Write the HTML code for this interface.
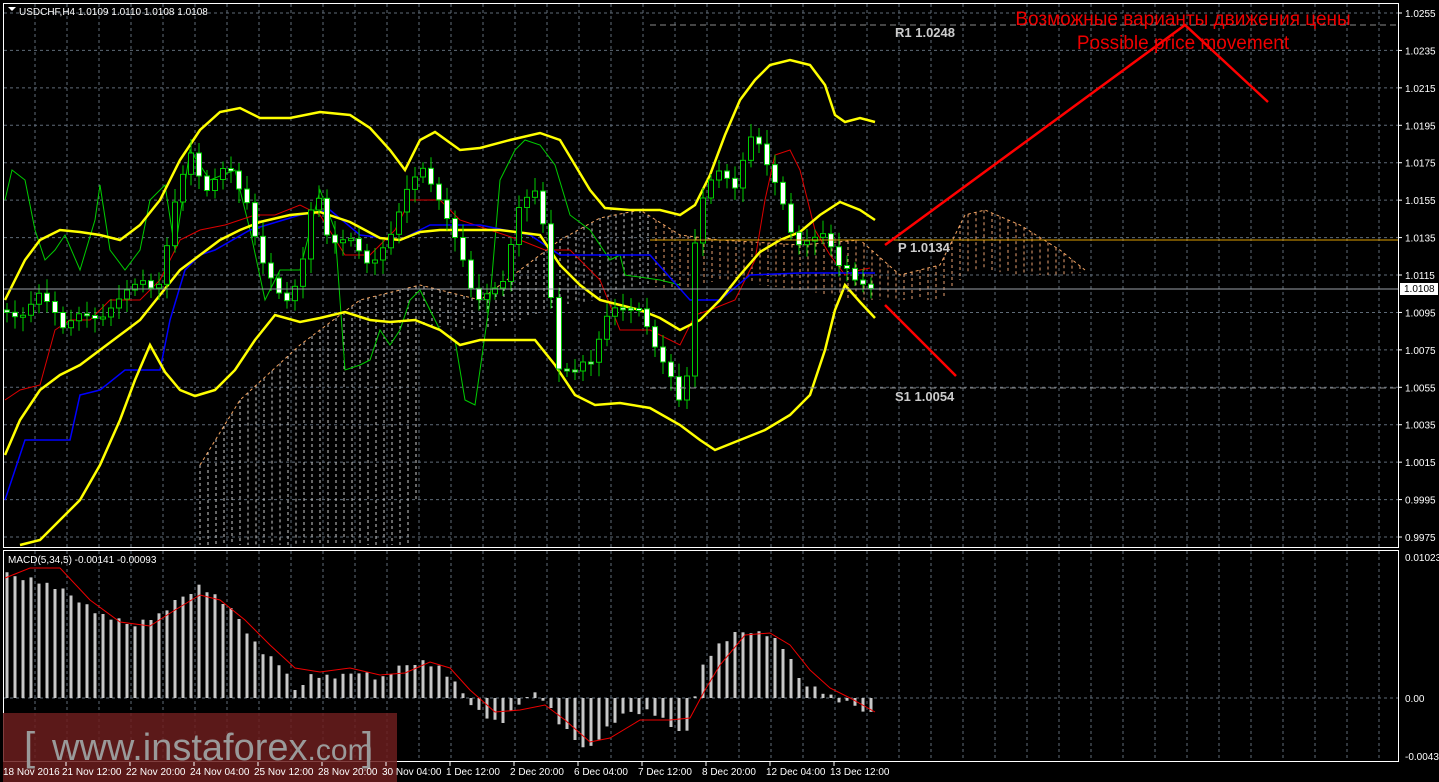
<!DOCTYPE html><html><head><meta charset="utf-8"><style>
html,body{margin:0;padding:0;background:#000;width:1439px;height:782px;overflow:hidden}
svg{display:block}
text{font-family:"Liberation Sans",sans-serif}
</style></head><body>
<svg id="s" width="1439" height="782" xmlns="http://www.w3.org/2000/svg">
<rect width="1439" height="782" fill="#000"/>
<g id="grid"></g>
<g id="cloud"></g>
<g id="lines"></g>
<g id="candles"></g>
<g id="macd"></g>
<line x1="650" y1="25" x2="1398" y2="25" stroke="#8a8a8a" stroke-dasharray="6,4"/>
<line x1="650" y1="240" x2="1398" y2="240" stroke="#e0a000" stroke-width="1"/>
<line x1="650" y1="388" x2="1398" y2="388" stroke="#8a8a8a" stroke-dasharray="6,4"/>
<line x1="3" y1="289" x2="1398" y2="289" stroke="#9aa0a8"/>
<text x="895" y="37" fill="#ccc" font-family="Liberation Mono" font-size="13" font-weight="bold">R1 1.0248</text>
<text x="898" y="252" fill="#ccc" font-family="Liberation Mono" font-size="13" font-weight="bold">P 1.0134</text>
<text x="895" y="401" fill="#ccc" font-family="Liberation Mono" font-size="13" font-weight="bold">S1 1.0054</text>
<polyline points="885,245 1185,25 1268,102" fill="none" stroke="#f00" stroke-width="2.5"/>
<line x1="885" y1="305" x2="956" y2="376" stroke="#f00" stroke-width="2.5"/>
<text x="1183" y="25" fill="#e00" font-size="19" text-anchor="middle">Возможные варианты движения цены</text>
<text x="1183" y="49" fill="#e00" font-size="19" text-anchor="middle">Possible price movement</text>
<rect x="3.5" y="3.5" width="1395" height="544" fill="none" stroke="#fff"/>
<rect x="3.5" y="550.5" width="1395" height="211" fill="none" stroke="#fff"/>
<path d="M8 7 L16 7 L12 11Z" fill="#fff"/>
<text x="19" y="15" fill="#fff" font-size="10">USDCHF,H4  1.0109 1.0110 1.0108 1.0108</text>
<text x="8" y="563" fill="#fff" font-size="10">MACD(5,34,5) -0.00141 -0.00093</text>
<g id="axis" fill="#fff" font-size="10"></g>
<rect x="1400" y="283" width="38" height="12" fill="#fff"/>
<text x="1404" y="292" fill="#000" font-size="10">1.0108</text>
<rect x="3" y="713" width="394" height="69" fill="#6b1d1d" opacity="0.85"/>
<text x="24" y="760" fill="#9a9a9a" font-size="40">[</text>
<text x="52" y="760" fill="#9a9a9a" font-size="38">www.instaforex<tspan font-size="30">.com</tspan></text>
<text x="362" y="760" fill="#9a9a9a" font-size="40">]</text>
<g id="dates" fill="#fff" font-size="10"></g>
</svg>
<script>
var NS="http://www.w3.org/2000/svg";
function el(p,t,a){var e=document.createElementNS(NS,t);for(var k in a)e.setAttribute(k,a[k]);document.getElementById(p).appendChild(e);return e;}
function interp(pts,x){if(x<=pts[0][0])return pts[0][1];for(var i=1;i<pts.length;i++){if(x<=pts[i][0]){var a=pts[i-1],b=pts[i];return a[1]+(b[1]-a[1])*(x-a[0])/(b[0]-a[0]);}}return pts[pts.length-1][1];}
function pl(id,pts,col,w,extra){var s=pts.map(function(p){return p.join(",")}).join(" ");var a={points:s,fill:"none",stroke:col,"stroke-width":w};for(var k in extra)a[k]=extra[k];el(id,"polyline",a);}
(function(){
for(var x=35;x<1398;x+=32){el("grid","line",{x1:x,y1:4,x2:x,y2:547,stroke:"#5f6b78","stroke-dasharray":"3,3"});el("grid","line",{x1:x,y1:551,x2:x,y2:761,stroke:"#5f6b78","stroke-dasharray":"3,3"});}
var labs=["1.0255","1.0235","1.0215","1.0195","1.0175","1.0155","1.0135","1.0115","1.0095","1.0075","1.0055","1.0035","1.0015","0.9995","0.9975"];
for(var i=0;i<15;i++){var y=13+i*37.43;el("grid","line",{x1:4,y1:y,x2:1398,y2:y,stroke:"#5f6b78","stroke-dasharray":"3,3"});el("axis","line",{x1:1398,y1:y,x2:1402,y2:y,stroke:"#fff"});var t=el("axis","text",{x:1405,y:y+4});t.textContent=labs[i];}
el("grid","line",{x1:4,y1:698,x2:1398,y2:698,stroke:"#5f6b78","stroke-dasharray":"3,3"});
[[561,"0.01023"],[702,"0.00"],[760,"-0.00433"]].forEach(function(a){var t=el("axis","text",{x:1405,y:a[0]});t.textContent=a[1];});
var ds=["18 Nov 2016","21 Nov 12:00","22 Nov 20:00","24 Nov 04:00","25 Nov 12:00","28 Nov 20:00","30 Nov 04:00","1 Dec 12:00","2 Dec 20:00","6 Dec 04:00","7 Dec 12:00","8 Dec 20:00","12 Dec 04:00","13 Dec 12:00"];
for(var i=0;i<ds.length;i++){var t=el("dates","text",{x:i==0?3:66+(i-1)*64-4,y:775});t.textContent=ds[i];if(i>0)el("dates","line",{x1:66+(i-1)*64,y1:762,x2:66+(i-1)*64,y2:766,stroke:"#fff"});}
var cU=[[200,465],[240,400],[300,345],[360,300],[420,285],[480,300],[520,270],[560,240],[600,218],[640,210],[680,235],[720,240],[800,245],[860,240],[900,275],[940,265],[965,215],[985,210],[1020,225],[1060,250],[1085,270]];
var cL=[[200,545],[300,545],[360,545],[415,545],[420,325],[480,330],[520,320],[560,305],[600,300],[640,285],[680,290],[720,280],[800,290],[860,300],[900,300],[940,300],[965,275],[985,270],[1020,275],[1060,275],[1085,272]];
for(var x=200;x<1085;x+=8){var a=interp(cU,x),b=interp(cL,x);el("cloud","line",{x1:x,y1:a,x2:x,y2:b,stroke:x<650?"#ccc":"#e8a070","stroke-dasharray":"3,3","stroke-width":1});}
pl("cloud",cU,"#f4a460",1,{"stroke-dasharray":"3,3"});
var green=[[5,200],[12,170],[25,180],[35,230],[45,260],[55,250],[65,235],[80,270],[95,220],[100,185],[110,250],[125,270],[140,250],[150,200],[165,185],[175,250],[190,150],[210,180],[235,170],[250,230],[265,300],[280,270],[300,270],[320,190],[335,230],[345,370],[360,365],[370,360],[380,330],[390,345],[400,330],[410,300],[420,290],[440,330],[455,340],[465,400],[475,405],[490,300],[500,180],[515,150],[525,140],[540,145],[555,165],[570,215],[590,230],[610,260],[620,255],[625,275],[660,280],[680,285]];
pl("lines",green,"#0c0",1);
var red=[[5,400],[20,390],[40,385],[55,330],[70,320],[90,320],[110,300],[140,300],[160,280],[180,240],[200,230],[225,225],[240,220],[255,215],[275,215],[300,205],[320,215],[345,255],[370,255],[395,230],[410,200],[440,200],[460,220],[490,230],[520,240],[545,250],[570,250],[600,280],[620,330],[650,330],[680,345],[695,315],[710,310],[735,300],[755,260],[765,200],[775,155],[790,150],[800,170],[815,230],[830,255],[845,275],[860,270],[870,268]];
pl("lines",red,"#d00",1);
var blue=[[5,500],[25,440],[70,440],[80,395],[100,390],[125,370],[160,370],[170,320],[185,270],[200,255],[215,250],[250,230],[300,215],[330,210],[360,235],[400,240],[430,225],[480,225],[530,235],[560,255],[600,255],[650,255],[690,300],[720,300],[750,275],[800,273],[875,273]];
pl("lines",blue,"#00f",1.5);
var up=[[5,300],[25,260],[40,240],[60,230],[80,232],[100,235],[120,240],[140,225],[160,200],[180,160],[200,130],[220,112],[240,108],[260,118],[290,118],[320,112],[350,115],[370,128],[390,150],[405,170],[420,140],[435,132],[460,150],[480,148],[510,140],[540,133],[560,140],[575,165],[590,190],[605,208],[630,210],[660,210],[680,215],[695,205],[710,175],[725,135],[740,100],[755,80],[770,65],[790,60],[810,65],[825,85],[835,115],[845,122],[860,118],[875,122]];
var md=[[5,455],[20,420],[40,390],[60,375],[80,365],[100,350],[120,335],[140,320],[160,295],[180,270],[200,255],[220,240],[240,230],[260,222],[290,215],[320,212],[350,222],[380,238],[400,240],[420,232],[440,230],[470,230],[500,230],[540,235],[560,265],[580,285],[600,300],[620,305],[640,310],[660,318],[680,330],[700,320],[720,300],[740,275],[760,252],[780,240],[800,232],[820,215],[840,202],[860,210],[875,220]];
var lo=[[20,545],[40,540],[60,520],[80,500],[100,465],[120,420],[135,380],[150,345],[165,372],[180,390],[195,396],[215,390],[235,370],[255,340],[275,315],[300,322],[320,318],[345,312],[370,320],[390,322],[415,320],[440,330],[460,345],[480,340],[510,340],[535,340],[555,365],[575,395],[595,405],[620,403],[650,408],[680,425],[700,440],[715,450],[740,440],[765,430],[790,415],[810,395],[825,350],[835,310],[845,285],[860,302],[875,318]];
pl("lines",up,"#ff0",2.5);pl("lines",md,"#ff0",2.5);pl("lines",lo,"#ff0",2.5);
var cl=[[5,310],[20,320],[40,295],[60,325],[80,310],[100,320],[130,290],[160,280],[175,200],[190,150],[205,195],[225,170],[245,190],[260,255],[285,305],[300,280],[315,190],[330,240],[350,235],[370,268],[390,240],[405,200],[420,158],[440,200],[460,250],[475,305],[500,290],[520,200],[535,190],[548,245],[555,370],[575,375],[590,360],[610,305],[640,310],[655,350],[670,380],[685,405],[695,240],[705,185],[720,170],[735,190],[750,140],[765,155],[780,190],[795,245],[810,240],[825,235],[840,272],[855,275],[875,288]];
var prev=interp(cl,0);
for(var x=7;x<=876;x+=8){var c=interp(cl,x)+((x*37)%11-5);var o=prev;var tp=Math.min(o,c),bt=Math.max(o,c);if(bt-tp<2)bt=tp+2;
el("candles","line",{x1:x,y1:tp-6-((x*13)%9),x2:x,y2:bt+6+((x*7)%9),stroke:"#0c0"});
el("candles","rect",{x:x-2.5,y:tp,width:5,height:bt-tp,fill:c<o?"#000":"#fff",stroke:"#0c0","stroke-width":1});prev=c;}
var h=[[5,575],[30,578],[60,590],[80,600],[100,615],[130,625],[160,615],[185,595],[200,585],[220,600],[240,620],[260,650],[280,665],[295,690],[310,675],[340,678],[360,670],[380,680],[400,668],[420,660],[440,668],[460,690],[480,712],[500,725],[515,710],[530,690],[545,700],[560,725],[575,740],[590,748],[610,725],[630,712],[650,710],[670,725],[685,740],[700,670],[715,648],[735,635],[750,630],[770,635],[785,650],[800,680],[820,690],[840,702],[860,707],[875,715]];
for(var x=7;x<=876;x+=8){var y=interp(h,x)+((x*17)%7-3);el("macd","rect",{x:x-1.5,y:Math.min(y,698),width:3,height:Math.abs(698-y),fill:"#c8c8c8"});}
var sig=[[5,578],[30,568],[60,568],[90,600],[120,622],[150,626],[175,610],[200,595],[220,600],[245,620],[270,645],[295,668],[320,672],[350,668],[380,675],[405,673],[430,662],[450,668],[470,690],[495,712],[520,710],[545,705],[565,720],[590,742],[610,738],[640,720],[670,720],[690,718],[705,690],[720,665],[745,635],[770,633],[790,645],[810,670],[830,688],[850,698],[875,712]];
pl("macd",sig,"#e00",1);
})();
</script>
</body></html>
